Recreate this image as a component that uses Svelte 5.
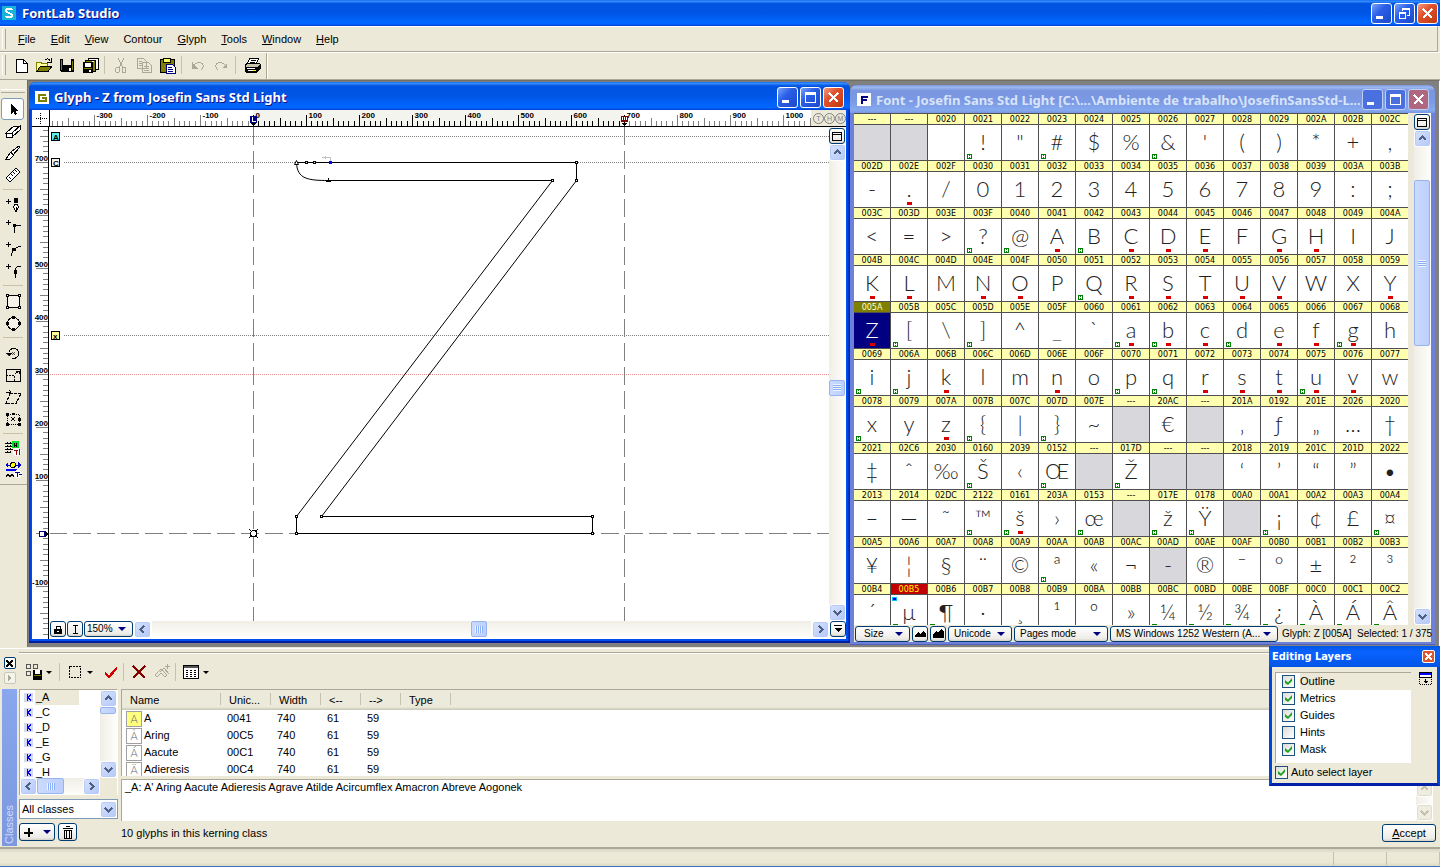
<script>
  const menus = ["File", "Edit", "View", "Contour", "Glyph", "Tools", "Window", "Help"];

  // These have no underlined mnemonic
  const noMnemonic = ["Contour"];

  const mainTools = ["new", "open", "save", "saveall", "|", "cut", "copy", "paste", "|", "undo", "redo", "|", "print"];

  const sideTools = [
    "edit", "eraser", "knife", "measure", "|",
    "pen", "corner", "curve", "tangent", "|",
    "rect", "ellipse", "|",
    "rotate", "scale", "slant", "free", "|",
    "t1hints", "tthints",
  ];

  // code:flags  h = hinted, k = in a kerning class, g = empty cell, d = duplicate
  const codes = `
    ---:g ---:g 0020 0021:h 0022 0023:h 0024 0025 0026:h 0027 0028 0029 002A 002B 002C
    002D 002E:k 002F 0030 0031 0032 0033 0034 0035 0036 0037 0038 0039 003A 003B
    003C 003D 003E 003F:h 0040:h 0041:k 0042:h 0043:k 0044:k 0045:k 0046 0047:k 0048:k 0049 004A
    004B:k 004C:k 004D 004E:k 004F:k 0050 0051:h 0052:k 0053:k 0054:k 0055:k 0056:k 0057 0058 0059:k
    005A:k 005B:h 005C 005D:h 005E 005F 0060 0061:hk 0062:hk 0063:k 0064:h 0065:k 0066:k 0067:hk 0068
    0069:h 006A:h 006B:k 006C 006D 006E:k 006F 0070:h 0071:h 0072:k 0073:k 0074:k 0075:hk 0076:k 0077
    0078:h 0079 007A:k 007B:h 007C 007D:h 007E ---:g 20AC ---:g 201A 0192 201E 2026 2020
    2021 02C6 2030 0160:h 2039 0152:h ---:g 017D:h ---:g ---:g 2018 2019 201C 201D 2022
    2013 2014 02DC 2122:h 0161:hk 203A 0153:h ---:g 017E:h 0178:h 00A0:g 00A1:h 00A2 00A3 00A4:h
    00A5 00A6 00A7 00A8 00A9 00AA:h 00AB 00AC 00AD:g 00AE 00AF 00B0 00B1 00B2 00B3
    00B4 00B5:hd 00B6:h 00B7 00B8 00B9 00BA 00BB 00BC:h 00BD:h 00BE:h 00BF:h 00C0:h 00C1:h 00C2:h`;

  const cells = codes
    .trim()
    .split(/\s+/)
    .map((item) => {
      const [code, flags = ""] = item.split(":");
      let char = code === "---" ? "" : String.fromCodePoint(parseInt(code, 16));
      if (code === "00AD") char = "-";
      return { code, flags, char };
    });

  let selected = $state("005A");

  const classes = ["_A", "_C", "_D", "_E", "_G", "_H"];

  const members = [
    ["A", "0041", "A"],
    ["Aring", "00C5", "Å"],
    ["Aacute", "00C1", "Á"],
    ["Adieresis", "00C4", "Ä"],
  ];

  let layers = $state([
    { name: "Outline", on: true },
    { name: "Metrics", on: true },
    { name: "Guides", on: true },
    { name: "Hints", on: false },
    { name: "Mask", on: true },
  ]);
  let autoSelect = $state(true);
  let zoom = $state("150%");
  let definition = $state("_A: A' Aring Aacute Adieresis Agrave Atilde Acircumflex Amacron Abreve Aogonek");

  // Font units to canvas pixels, origin at the glyph's zero point
  const originX = 203;
  const originY = 406;
  const toX = (u) => Math.round(originX + u * 0.53) + 0.5;
  const toY = (u) => Math.round(originY - u * 0.53) + 0.5;

  const ticks = (from, to) => {
    const list = [];
    for (let u = from; u <= to; u += 10) {
      list.push({ u, size: u % 100 === 0 ? 11 : u % 50 === 0 ? 8 : 5 });
    }
    return list;
  };
  const hTicks = ticks(-380, 1050);
  const vTicks = ticks(-190, 760);

  const guides = [
    { y: 9.5, tag: "A", kind: "asc" },
    { y: 35.5, tag: "C", kind: "cap" },
    { y: 208.5, tag: "x", kind: "xh" },
  ];

  const nodes = [
    [256.5, 35.5], [264.5, 35.5], [526.5, 35.5], [526.5, 53.5], [502.5, 53.5],
    [271.5, 389.5], [542.5, 389.5], [542.5, 406.5], [246.5, 406.5], [246.5, 389.5],
  ];
</script>

{#snippet icon(name)}
  <svg class="icon" width="20" height="20" viewBox="0 0 20 20" aria-hidden="true">
    {#if name === "new"}
      <path d="M5 4h7l4 4v9H5z" fill="#fff" stroke="#000" />
      <path d="M12 4v4h4" fill="none" stroke="#000" />
    {:else if name === "open"}
      <path d="M2.500 16V7h4l1 1h6v3" fill="#ffffa0" stroke="#808000" />
      <path d="M3 16.500L6.500 11H18l-4 5.500z" fill="#808000" stroke="#000" />
      <path d="M11 5c2-2 4-1 5 1M17 3v4h-4" fill="none" stroke="#000" />
    {:else if name === "save"}
      <path d="M3 4h14v13H4l-1-1z" fill="#000" />
      <path d="M4 5h1v10H4zM15 6h1v9h-1z" fill="#808000" />
      <path d="M6 4h8v6H6z" fill="#ece9d8" />
      <path d="M12 13h2v3h-2z" fill="#fff" />
    {:else if name === "saveall"}
      <path d="M8 3h10v11H8z" fill="#fff" stroke="#000" />
      <path d="M5.500 5h10v11h-10z" fill="#808000" stroke="#000" />
      <path d="M3 7h10v11H3z" fill="#000" />
      <path d="M5 8h6v4H5zM15 4h2v1h-2zM12 6h2v1h-2z" fill="#fff" />
      <path d="M4 13h8v1H4z" fill="#808000" /><path d="M9 15h2v2H9z" fill="#fff" />
    {:else if name === "cut"}
      <path d="M7 3l5 10M13 3L8 13" stroke="#aca899" fill="none" />
      <ellipse cx="6.500" cy="15" rx="2" ry="2.500" stroke="#aca899" fill="none" />
      <ellipse cx="13" cy="15" rx="2" ry="2.500" stroke="#aca899" fill="none" />
    {:else if name === "copy"}
      <path d="M3 3h6l3 3v7H3zM8 7h6l3 3v7H8z" fill="#ece9d8" stroke="#aca899" />
      <path d="M5 6h3M5 8h3M5 10h3M10 11h5M10 13h5M10 15h5" stroke="#aca899" />
    {:else if name === "paste"}
      <path d="M3 4h14v13H3z" fill="#808000" stroke="#000" />
      <path d="M6 3h7v4H6z" fill="#ffff60" stroke="#000" />
      <path d="M9 9h6l3 3v6H9z" fill="#fff" stroke="#000080" />
      <path d="M11 12h4M11 14h5M11 16h5" stroke="#000080" />
    {:else if name === "undo"}
      <path d="M4 7v6h6M4.500 12.500C6 8 10 7 13 8c3 1 3 5 0 7" fill="none" stroke="#aca899" />
      <path d="M4 8l5 5H4z" fill="#aca899" />
    {:else if name === "redo"}
      <path d="M15.500 12.500C14 8 10 7 7 8c-3 1-3 5 0 7" fill="none" stroke="#aca899" />
      <path d="M16 8l-5 5h5z" fill="#aca899" />
    {:else if name === "print"}
      <path d="M8 3h9l-3 6H5z" fill="#fff" stroke="#000" />
      <path d="M9 5h5M8 7h5" stroke="#000" />
      <path d="M3 10l3-2h10l2 1v5l-3 3H4l-1-1z" fill="#c8c4b0" stroke="#000" />
      <path d="M3 12h12v5H4zM15 12l3-3v5l-3 3z" fill="#000" />
      <path d="M5 13h8v1H5zM6 15h6v1H6z" fill="#fff" /><path d="M11 15h3v1h-3z" fill="#ffff00" />
    {:else if name === "edit"}
      <path d="M8 4v11l2.500-2.500L12 16l2-1-1.500-3H15z" fill="#000" />
    {:else if name === "eraser"}
      <path d="M3 12l8-7h6l-8 7z" fill="#fff" stroke="#000" />
      <path d="M3 12h6v4H3zM9 12l8-7v4l-8 7z" fill="#fff" stroke="#000" />
    {:else if name === "knife"}
      <path d="M2.500 16.500h4l4-4-3-3zM8 9l2 3 7-8-1-1z" fill="#fff" stroke="#000" />
    {:else if name === "measure"}
      <path d="M3 13L13 3l4 4L7 17z" fill="#fff" stroke="#000" />
      <path d="M6 12l2 2M8 9l2 2M10 7l2 2M12 5l2 2" stroke="#000" />
    {:else if name === "pen"}
      <path d="M3 6.500h5M5.500 4v5" stroke="#000" />
      <path d="M11 3h4v5h-4z" fill="#000" />
      <path d="M11.500 9.500h3l1 3-2.500 4-2.500-4z" fill="#fff" stroke="#000" /><path d="M13 12v5" stroke="#000" />
    {:else if name === "corner"}
      <path d="M3 5.500h5M5.500 3v5M11.500 16V8.500H18" stroke="#000" fill="none" />
      <path d="M10 7h3v3h-3z" fill="#000" />
    {:else if name === "curve"}
      <path d="M3 5.500h5M5.500 3v5" stroke="#000" /><path d="M8 17c1-6 4-9 10-10" fill="none" stroke="#000" />
      <path d="M9 9h4v3H9z" fill="#000" />
    {:else if name === "tangent"}
      <path d="M3 5.500h5M5.500 3v5" stroke="#000" /><path d="M12.500 17V9c0-3 2-4 5-4" fill="none" stroke="#000" />
      <path d="M11 9h3v4h-3z" fill="#000" />
    {:else if name === "rect"}
      <path d="M4.500 4.500h12v12h-12z" fill="#f4f2ea" stroke="#000" />
      <path d="M3.500 3.500h2v2h-2zM15.500 3.500h2v2h-2zM3.500 15.500h2v2h-2zM15.500 15.500h2v2h-2z" fill="#fff" stroke="#000" />
    {:else if name === "ellipse"}
      <circle cx="10.500" cy="10.500" r="6" fill="#f4f2ea" stroke="#000" />
      <path d="M9 3h3v3H9zM9 15h3v3H9zM3 9h3v3H3zM15 9h3v3h-3z" fill="#000" />
    {:else if name === "rotate"}
      <path d="M6 9a5 5 0 1 1 3 6" fill="none" stroke="#000" />
      <path d="M3 10h6l-3 3zM9 9l3 3M12 9l-3 3" fill="#000" stroke="#000" stroke-width=".6" />
    {:else if name === "scale"}
      <path d="M3.500 4.500h14v12h-14z" fill="none" stroke="#000" />
      <path d="M3 10.500h8.500V16" fill="none" stroke="#000" stroke-dasharray="2 1" />
      <path d="M12 9l4-3M13 6h3v3" fill="none" stroke="#000" />
    {:else if name === "slant"}
      <path d="M7 6.500h11l-5 10H3z" fill="none" stroke="#000" stroke-dasharray="3 1" />
      <path d="M3 5.500h5M6 3l2 2-2 2" fill="none" stroke="#000" />
    {:else if name === "free"}
      <path d="M4.500 5.500h12v10h-12z" fill="none" stroke="#000" stroke-dasharray="1 1" />
      <path d="M3 4h3v3H3zM15 9h3v3h-3zM3 14h3v3H3zM15 14h3v3h-3zM9 4h3v2H9z" fill="#000" />
      <path d="M8 8l4 4M12 8l-4 4" stroke="#000" />
    {:else if name === "t1hints"}
      <path d="M2 4.500h8M2 7.500h8M2 10.500h10M4.500 3v12M7.500 3v12M2 13.500h6" stroke="#000" stroke-dasharray="2 1" />
      <path d="M9 2h7v7H9z" fill="#0d2" /><path d="M11.500 4v4M13.500 4v4M11 6h3" stroke="#000" />
      <circle cx="14" cy="13" r="4" fill="#fff" /><path d="M11 11.500h4M13 11v5M16.500 10v6" stroke="#a00000" />
    {:else if name === "tthints"}
      <path d="M2 4l3-3v6zM18 4l-3-3v6z" fill="#0000c0" /><path d="M3 4h14" stroke="#0000c0" />
      <circle cx="10" cy="4" r="2.500" fill="#ff0" stroke="#000" /><path d="M3 8h11v2H3z" fill="#00f" />
      <path d="M3 16l2-3 2 3 2-3 2 3" fill="none" stroke="#000" />
      <circle cx="15" cy="13" r="4" fill="#fff" /><path d="M12 11.500h5M14.500 12v4M16 13.500h3" stroke="#000080" />
    {:else if name === "gridsave"}
      <path d="M2.500 2.500h4v4h-4zM9.500 2.500h4v4h-4zM2.500 9.500h4v4h-4z" fill="none" stroke="#555" />
      <path d="M9 8h9v10H9z" fill="#000" /><path d="M11 8h5v4h-5z" fill="#fff" /><path d="M10 13h7v1h-7z" fill="#808000" />
    {:else if name === "select"}
      <path d="M4.500 4.500h11v11h-11z" fill="none" stroke="#000" stroke-dasharray="2 1" />
    {:else if name === "accept"}
      <path d="M5 10l4 4 7-8v2l-7 8-4-4z" fill="#d00000" stroke="#d00000" />
    {:else if name === "delete"}
      <path d="M4 4l12 12M16 4L4 16" stroke="#800000" stroke-width="2" />
    {:else if name === "merge"}
      <path d="M3 13l6-6 6 6-2 2-4-4-4 4zM8 10l4-4 5 6M13 4.500h5M15.500 2v5" fill="none" stroke="#aca899" />
    {:else if name === "list"}
      <path d="M2.500 3.500h15v13h-15z" fill="#fff" stroke="#000" /><path d="M3 5h14" stroke="#555" stroke-width="2" />
      <path d="M5 8.500h10M5 10.500h10M5 12.500h10M5 14.500h10" stroke="#000" stroke-dasharray="2 2" />
    {:else if name === "trash"}
      <path d="M5 6.500h10M8 4.500h4M6.500 8.500h7v8h-7zM8.500 9v7M11.500 9v7" fill="none" stroke="#000" />
    {/if}
  </svg>
{/snippet}

{#snippet arrow(dir, label, off = false)}
  <button class="arrow {dir}" class:off aria-label={label}>
    <svg width="9" height="9" viewBox="0 0 9 9"><path d="M1 6l3.500-3.500L8 6" /></svg>
  </button>
{/snippet}

{#snippet winButtons(restore = false)}
  <div class="win-buttons">
    <button aria-label="Minimize"><svg viewBox="0 0 19 19"><path d="M4 12h7v3H4z" fill="#fff" /></svg></button>
    <button aria-label="Maximize">
      <svg viewBox="0 0 19 19" fill="none" stroke="#fff">
        {#if restore}
          <path d="M7.500 7V4.500h7v7H12M4.500 8.500h6v6h-6z" /><path d="M7 5h8M4 9h7" />
        {:else}
          <path d="M4.500 4.500h10v10h-10z" /><path d="M4 5.500h11" stroke-width="2" />
        {/if}
      </svg>
    </button>
    <button class="close" aria-label="Close">
      <svg viewBox="0 0 19 19"><path d="M5 5l9 9M14 5l-9 9" stroke="#fff" stroke-width="2" /></svg>
    </button>
  </div>
{/snippet}

{#snippet restoreIcon()}
  <svg width="10" height="9" viewBox="0 0 10 9" aria-hidden="true">
    <path d="M.5.5h9v8h-9zM0 2.500h10" fill="none" stroke="#000" />
  </svg>
{/snippet}

<div class="app">
  <header class="titlebar">
    <svg class="logo" width="14" height="14" viewBox="0 0 14 14" aria-hidden="true">
      <rect width="14" height="14" fill="#18b4d8" />
      <path d="M10 4C9 2 4 2 4 4.500S10 7 10 9.500 5 12 4 10" fill="none" stroke="#fff" stroke-width="2" />
    </svg>
    <h1>FontLab Studio</h1>
    {@render winButtons(true)}
  </header>

  <nav class="menubar">
    <span class="grip"></span>
    {#each menus as menu}
      <button>{#if noMnemonic.includes(menu)}{menu}{:else}<u>{menu[0]}</u>{menu.slice(1)}{/if}</button>
    {/each}
  </nav>

  <div class="toolbar">
    <div class="toolbar-group">
      <span class="grip"></span>
      {#each mainTools as tool}
        {#if tool === "|"}
          <span class="sep"></span>
        {:else}
          <button class="tool" aria-label={tool}>{@render icon(tool)}</button>
        {/if}
      {/each}
    </div>
  </div>

  <main class="workspace">
    <aside class="side">
      <div class="side-tools">
        <span class="side-grip"></span>
        {#each sideTools as tool}
          {#if tool === "|"}
            <span class="side-sep"></span>
          {:else}
            <button class:active={tool === "edit"} aria-label={tool}>{@render icon(tool)}</button>
          {/if}
        {/each}
      </div>
    </aside>

    <div class="desktop">
      <section class="window glyph-window">
        <div class="caption">
          <svg width="14" height="13" viewBox="0 0 14 13" aria-hidden="true">
            <rect width="14" height="13" rx="1" fill="#fff" />
            <path d="M11 3.500H4v6h6.500V7H7" fill="none" stroke="#808000" stroke-width="2" />
          </svg>
          <h2>Glyph - Z from Josefin Sans Std Light</h2>
          {@render winButtons()}
        </div>
        <div class="editor">
          <div class="corner">
            <svg width="18" height="17" aria-hidden="true">
              <path d="M8.500 3v11M4 8.500h11" stroke="#000" stroke-dasharray="1 1" />
            </svg>
          </div>
          <div class="hruler">
            <svg>
              <rect x="203" y="0" width="371" height="16" fill="#f4f4ee" />
              {#each hTicks as t}
                <path d="M{toX(t.u)} {16 - t.size}V16" stroke={t.u >= 0 && t.u <= 700 ? "#000" : "#808080"} />
                {#if t.size === 11}
                  <text x={toX(t.u) + 2} y="8">{t.u}</text>
                {/if}
              {/each}
              <path d="M0 16.500h900" stroke="#000" />
              <path d="M200 6h7v7h-7z" fill="#000080" /><path d="M202.500 7v4h3" stroke="#fff" fill="none" />
              <path d="M201 13h5l-2.500 3z" fill="#000" />
              <path d="M571.500 6.500h6v5h-6z" fill="#fff" stroke="#800000" /><path d="M573.500 7v3M575.500 7v3M571 10.500h7" stroke="#800000" />
              <path d="M572 13h5l-2.500 3z" fill="#000" />
            </svg>
            <div class="ruler-modes"><i>T</i><i>H</i><i>M</i></div>
          </div>
          <div class="vruler">
            <svg>
              {#each vTicks as t}
                <path d="M{16 - (t.size === 11 ? 12 : t.size)} {toY(t.u)}H16" stroke="#808080" />
                {#if t.size === 11 && t.u !== 0}
                  <text x="16" y={toY(t.u) - 2} text-anchor="end">{t.u}</text>
                {/if}
              {/each}
              <path d="M16.500 0v520" stroke="#000" />
              <path d="M7.500 404.500h5v5h-5z" fill="#fff" stroke="#000080" /><path d="M13 404l3 3-3 3z" fill="#000" />
            </svg>
          </div>
          <div class="canvas">
            <svg>
              {#each guides as g}
                <path d="M14 {g.y}H780" class="guide" />
                <g class="tag {g.kind}">
                  <rect x="1.500" y={g.y - 4} width="8" height="8" />
                  <text x="3" y={g.y + 3}>{g.tag}</text>
                </g>
              {/each}
              <path d="M0 247.500H780" class="guide low" />
              <path d="M203.500 0V500M574.500 0V500" class="metric" />
              <path d="M0 406.500H780" class="metric" stroke-dashoffset="1" />
              <circle cx="203.500" cy="406.500" r="3" fill="#fff" stroke="#000" />
              <path d="M199 402l2 2M208 402l-2 2M199 411l2-2M208 411l-2-2" stroke="#000" />
              <path
                class="outline"
                d="M246.500 35.500H526.500V53.500L271.500 389.500H542.500V406.500H246.500V389.500L502.500 53.500H278.500C258 53.500 247 52 246.500 35.500"
              />
              {#each nodes as [x, y]}
                <rect x={x - 1} y={y - 1} width="2" height="2" fill="#fff" stroke="#000" />
              {/each}
              <path class="outline mark" d="M244.500 37.500l2-4 2 4z" />
              <path d="M276 55l2.500-4 2.500 4z" fill="#000" />
              <rect x="279" y="34" width="3" height="3" fill="#00f" />
              <path d="M280.500 34v-3.500H275" fill="none" stroke="#c0c0c0" /><path d="M272 30.500l4-1.500v3z" fill="#c0c0c0" />
            </svg>
          </div>
          <div class="vscroll">
            <button class="mini" aria-label="Panel">{@render restoreIcon()}</button>
            {@render arrow("up", "Scroll up")}
            <div class="track"><span class="thumb short"></span></div>
            {@render arrow("down", "Scroll down")}
          </div>
          <div class="editor-bar">
            <button class="mini" aria-label="Lock">
              <svg width="8" height="9" viewBox="0 0 8 9"><path d="M0 4h8v5H0z" /><path d="M2 4V1.500h4V4" fill="none" stroke="#000" /><path d="M3 6h2v1H3z" fill="#fff" /></svg>
            </button>
            <button class="mini" aria-label="Text cursor">
              <svg width="7" height="9" viewBox="0 0 7 9"><path d="M1 .5h5M3.500 0v9M1 8.500h5" stroke="#000" /></svg>
            </button>
            <label class="combo zoom">
              <select bind:value={zoom} aria-label="Zoom"><option>150%</option></select>
            </label>
            {@render arrow("left", "Scroll left")}
            <div class="track"><span class="thumb short"></span></div>
            {@render arrow("right", "Scroll right")}
            <button class="mini" aria-label="Options">
              <svg width="8" height="8" viewBox="0 0 8 8"><path d="M0 0h8v1H0zM0 3h8L4 7z" /></svg>
            </button>
          </div>
        </div>
      </section>

      <section class="window font-window">
        <div class="caption">
          <svg width="14" height="13" viewBox="0 0 14 13" aria-hidden="true">
            <rect width="14" height="13" rx="1" fill="#fff" />
            <path d="M11 3.500H5V11M5 6.500h5" fill="none" stroke="#000080" stroke-width="2" />
          </svg>
          <h2>Font - Josefin Sans Std Light [C:\...\Ambiente de trabalho\JosefinSansStd-L...</h2>
          {@render winButtons()}
        </div>
        <div class="font-body">
          <div class="cells">
            {#each cells as cell}
              <button
                class="cell"
                class:selected={cell.code === selected}
                class:dup={cell.flags.includes("d")}
                class:empty={cell.flags.includes("g")}
                onclick={() => cell.char && (selected = cell.code)}
              >
                <span class="code">{cell.code}</span>
                <span class="char">{cell.char}</span>
                {#if cell.flags.includes("h")}
                  <svg class="flag hint" width="5" height="5" viewBox="0 0 5 5">
                    <path d="M0 0h5v5H0z" fill="#008000" /><path d="M1 1h1v3H1zM3 1h1v3H3zM2 2h1v1H2z" fill="#fff" />
                  </svg>
                {/if}
                {#if cell.flags.includes("k")}<span class="flag kern"></span>{/if}
                {#if cell.flags.includes("d")}<span class="flag double"></span>{/if}
              </button>
            {/each}
          </div>
          <div class="vscroll">
            <button class="mini" aria-label="Panel">{@render restoreIcon()}</button>
            {@render arrow("up", "Scroll up")}
            <div class="track"><span class="thumb long"></span></div>
            {@render arrow("down", "Scroll down")}
          </div>
        </div>
        <div class="font-bar">
          <label class="combo size"><select aria-label="Size"><option>Size</option></select></label>
          <button class="mini" aria-label="Smaller cells">
            <svg width="11" height="7" viewBox="0 0 11 7"><path d="M0 7V5l3-3 2 2 3-3 3 3v3z" /></svg>
          </button>
          <button class="mini" aria-label="Larger cells">
            <svg width="11" height="9" viewBox="0 0 11 9"><path d="M0 9V6l3-4 2 1 3-3 3 3v6z" /></svg>
          </button>
          <label class="combo unicode"><select aria-label="Index"><option>Unicode</option></select></label>
          <label class="combo mode"><select aria-label="Mode"><option>Pages mode</option></select></label>
          <label class="combo page"><select aria-label="Codepage"><option>MS Windows 1252 Western (A...</option></select></label>
          <p>Glyph: Z [005A]&nbsp; Selected: 1 / 375</p>
        </div>
      </section>
    </div>
  </main>

  <section class="dock">
    <div class="dock-side">
      <button class="dock-close" aria-label="Close panel">
        <svg width="7" height="7" viewBox="0 0 7 7"><path d="M0 0l7 7M7 0L0 7" stroke="#000" stroke-width="2" /></svg>
      </button>
      <button class="dock-close dim" aria-label="Expand panel">
        <svg width="4" height="6" viewBox="0 0 4 6"><path d="M0 0l3 3-3 3z" fill="#aca899" /></svg>
      </button>
      <span class="dock-label">Classes</span>
    </div>
    <div class="dock-main">
      <div class="dock-tools">
        <button class="tool" aria-label="Save classes">{@render icon("gridsave")}</button>
        <span class="drop"></span>
        <span class="sep"></span>
        <button class="tool" aria-label="Select">{@render icon("select")}</button>
        <span class="drop"></span>
        <button class="tool" aria-label="Apply">{@render icon("accept")}</button>
        <span class="sep"></span>
        <button class="tool" aria-label="Delete">{@render icon("delete")}</button>
        <button class="tool" aria-label="Add accents">{@render icon("merge")}</button>
        <span class="sep"></span>
        <button class="tool" aria-label="View">{@render icon("list")}</button>
        <span class="drop"></span>
      </div>
      <div class="dock-body">
        <div class="class-col">
          <div class="class-list">
            <ul>
              {#each classes as name, i}
                <li class:current={i === 0}>
                  <svg width="9" height="9" viewBox="0 0 9 9" aria-hidden="true">
                    <rect width="9" height="9" fill="#d4d8f0" />
                    <path d="M3 1v7M4 4.500L7 1.500M4 4.500L7 7.500" stroke="#00f" stroke-width="1" />
                  </svg>
                  <span>{name}</span>
                </li>
              {/each}
            </ul>
            <div class="vscroll">
              {@render arrow("up", "Scroll up")}
              <div class="track"><span class="thumb tiny"></span></div>
              {@render arrow("down", "Scroll down")}
            </div>
            <div class="hscroll">
              {@render arrow("left", "Scroll left")}
              <div class="track"><span class="thumb wide"></span></div>
              {@render arrow("right", "Scroll right")}
            </div>
          </div>
          <label class="filter">
            <select aria-label="Class filter"><option>All classes</option></select>
            <span class="arrow down"><svg width="9" height="9" viewBox="0 0 9 9"><path d="M1 6l3.500-3.500L8 6" /></svg></span>
          </label>
          <div class="class-actions">
            <button class="add" aria-label="Add class">
              <svg width="9" height="9" viewBox="0 0 9 9"><path d="M0 4.500h9M4.500 0v9" stroke="#000" stroke-width="2" /></svg>
              <span class="drop"></span>
            </button>
            <button class="bin" aria-label="Delete class">{@render icon("trash")}</button>
          </div>
        </div>
        <div class="member-col">
          <div class="member-table">
            <table>
              <thead>
                <tr><th>Name</th><th>Unic...</th><th>Width</th><th>&lt;--</th><th>--&gt;</th><th>Type</th><th></th></tr>
              </thead>
              <tbody>
                {#each members as [name, code, char], i}
                  <tr>
                    <td><span class="thumb-glyph" class:marked={i === 0}>{char}</span>{name}</td>
                    <td>{code}</td><td>740</td><td>61</td><td>59</td><td></td><td></td>
                  </tr>
                {/each}
              </tbody>
            </table>
          </div>
          <div class="member-text">
            <textarea aria-label="Class definition" spellcheck="false" bind:value={definition}></textarea>
            <div class="vscroll">
              {@render arrow("up", "Scroll up", true)}
              <div class="track"></div>
              {@render arrow("down", "Scroll down", true)}
            </div>
          </div>
          <div class="dock-foot">
            <p>10 glyphs in this kerning class</p>
            <button class="accept"><u>A</u>ccept</button>
          </div>
        </div>
      </div>
    </div>
  </section>

  <footer class="statusbar"><span></span><span></span><span></span></footer>

  <section class="layers">
    <div class="layers-caption">
      <h2>Editing Layers</h2>
      <button aria-label="Close">
        <svg width="7" height="7" viewBox="0 0 7 7"><path d="M0 0l7 7M7 0L0 7" stroke="#fff" stroke-width="2" /></svg>
      </button>
    </div>
    <div class="layers-body">
      <div class="layer-list">
        {#each layers as layer, i}
          <label class:current={i === 0}>
            <input type="checkbox" bind:checked={layer.on} /><span>{layer.name}</span>
          </label>
        {/each}
      </div>
      <svg width="13" height="13" viewBox="0 0 13 13" aria-hidden="true">
        <path d="M.5.5h12v5H.5z" fill="#fff" stroke="#000" /><path d="M1 1h11v2H1z" fill="#00f" />
        <path d="M.5 7v5.500h12V7" fill="none" stroke="#000" stroke-dasharray="1 1" />
        <path d="M6 7h1v2h2L6.500 11.500 4 9h2z" fill="#000" />
      </svg>
    </div>
    <label class="auto"><input type="checkbox" bind:checked={autoSelect} /><span>Auto select layer</span></label>
  </section>
</div>

<style>
  :global(body) {
    background: #ece9d8;
  }

  .app {
    position: relative;
    display: flex;
    flex-direction: column;
    min-height: 100vh;
    overflow: hidden;
    background: #ece9d8;
    color: #000;
    font: 11px/13px "Liberation Sans", Arial, sans-serif;
  }

  .app :is(button, select, textarea, input) {
    margin: 0;
    padding: 0;
    border: 0;
    background: none;
    color: inherit;
    font: inherit;
    box-sizing: border-box;
  }

  .app :is(h1, h2, p, ul) {
    margin: 0;
    padding: 0;
  }

  svg {
    display: block;
    flex: none;
    shape-rendering: crispEdges;
  }

  /* title bars */
  .titlebar,
  .caption {
    display: flex;
    align-items: center;
    flex: none;
    box-sizing: border-box;
    background: linear-gradient(#0a5be8 0, #3a95ff 4%, #0053e1 14%, #0055e5 50%, #06f 85%, #06f 92%, #003dd0 100%);
    color: #fff;
  }

  .titlebar {
    height: 26px;
    gap: 6px;
    padding: 0 2px;
  }

  h1,
  .caption h2 {
    flex: 1;
    overflow: hidden;
    white-space: nowrap;
    font: bold 13px/18px "Noto Sans", "Open Sans", sans-serif;
    text-shadow: 1px 1px #0f1089;
  }

  .win-buttons {
    display: flex;
    gap: 2px;
  }

  .win-buttons button {
    width: 21px;
    height: 21px;
    border: 1px solid #fff;
    border-radius: 3px;
    background: linear-gradient(135deg, #7aa2f8, #2a5fe8 40%, #1c48c8);
  }

  .win-buttons button.close {
    background: linear-gradient(135deg, #f09a80, #e0512c 40%, #c03810);
  }

  /* menu and toolbar */
  .menubar {
    display: flex;
    align-items: center;
    gap: 15px;
    height: 24px;
    margin-right: 2px;
    border-top: 1px solid #fff;
    border-right: 1px solid #aca899;
    border-bottom: 1px solid #aca899;
  }

  .menubar .grip {
    margin-right: -3px;
  }

  .grip {
    width: 2px;
    height: 20px;
    margin-left: 2px;
    border-right: 1px solid #aca899;
    border-left: 1px solid #fff;
  }

  .toolbar {
    display: flex;
    height: 26px;
    border-top: 1px solid #fff;
    border-bottom: 1px solid #aca899;
  }

  .toolbar-group {
    display: flex;
    align-items: center;
    padding: 0 3px 2px 0;
    border-right: 1px solid #aca899;
    box-shadow: 1px 0 #fff;
  }

  .toolbar .grip {
    margin-right: 3px;
  }

  .tool {
    display: grid;
    place-items: center;
    width: 23px;
    height: 24px;
  }

  .sep {
    width: 1px;
    height: 18px;
    margin: 0 4px 0 3px;
    background: #c5c2b0;
  }

  /* workspace */
  .workspace {
    display: flex;
    flex: 1;
    min-height: 400px;
  }

  .side {
    width: 27px;
    flex: none;
    border-right: 1px solid #716f64;
  }

  .side-tools {
    display: flex;
    flex-direction: column;
    align-items: center;
    padding: 9px 2px 2px 0;
    border-bottom: 1px solid #aca899;
  }

  .side-grip {
    width: 24px;
    height: 2px;
    margin-bottom: 5px;
    border-top: 1px solid #fff;
    border-bottom: 1px solid #aca899;
  }

  .side-tools button {
    display: grid;
    place-items: center;
    width: 23px;
    height: 22px;
    border-radius: 3px;
  }

  .app .side-tools button.active {
    border: 1px solid #7f9db9;
    background: #fff;
  }

  .side-sep {
    width: 20px;
    height: 1px;
    margin: 3px 0 4px;
    background: #c5c2a8;
  }

  .desktop {
    position: relative;
    flex: 1;
    border-top: 1px solid #716f64;
    border-right: 1px solid #fff;
    background: #808080;
  }

  .window {
    position: absolute;
    display: flex;
    flex-direction: column;
    box-sizing: border-box;
    border-radius: 7px 7px 0 0;
    overflow: hidden;
  }

  .glyph-window {
    top: 1px;
    bottom: 4px;
    left: 1px;
    width: 821px;
    padding: 0 4px 4px 3px;
    background: linear-gradient(90deg, #0831d9, #0050ee 3px, #0050ee calc(100% - 3px), #001ea0);
    box-shadow: inset 0 -2px #001ea0;
  }

  .caption {
    gap: 2px;
    height: 28px;
  }

  .caption > svg {
    margin-right: 3px;
  }

  .glyph-window .caption {
    margin: 0 -4px 0 -3px;
    padding: 2px 6px 0;
  }

  .font-window {
    top: 4px;
    right: 4px;
    bottom: 2px;
    width: 585px;
    padding: 0 4px 3px;
    background: #6f80d8;
    box-shadow: inset 0 -1px #5560b8;
  }

  .font-window .caption {
    height: 28px;
    margin: 0 -4px;
    padding: 1px 6px 0 7px;
    background: linear-gradient(#7a96df, #9db9f0 8%, #7a96df 20%, #7b98e4 55%, #85a9ee 90%, #7a96df);
  }

  .font-window .caption h2 {
    color: #d8e4f8;
    text-shadow: none;
  }

  .font-window .win-buttons button:not(.close) {
    background: #4a70e0;
  }

  .font-window .win-buttons button.close {
    background: #b06880;
  }

  .font-window .win-buttons button {
    border-color: #c0d0f4;
  }

  /* glyph editor */
  .editor {
    display: grid;
    grid-template: 17px 1fr 18px / 18px 1fr 17px;
    flex: 1;
    min-height: 0;
    background: #fff;
  }

  .editor svg text {
    font: bold 8px "Liberation Sans Narrow", "Liberation Sans", sans-serif;
  }

  .corner {
    border-right: 1px solid #000;
    border-bottom: 1px solid #000;
    box-sizing: border-box;
  }

  .hruler {
    display: flex;
    grid-column: 2 / 4;
    overflow: hidden;
  }

  .hruler svg {
    flex: 1;
    width: 0;
    height: 17px;
  }

  .ruler-modes {
    display: flex;
    align-items: center;
    height: 16px;
    padding-left: 2px;
    border-bottom: 1px solid #000;
    background: #ece9d8;
  }

  .ruler-modes i {
    flex: none;
    width: 9px;
    height: 9px;
    border: 1px solid #808080;
    border-radius: 50%;
    color: #808080;
    font: 7px/9px "Liberation Sans", sans-serif;
    text-align: center;
  }

  .vruler {
    grid-row: 2 / 4;
    overflow: hidden;
  }

  .vruler svg {
    width: 18px;
    height: 100%;
  }

  .canvas {
    overflow: hidden;
  }

  .canvas svg {
    width: 100%;
    height: 100%;
  }

  .guide {
    stroke: #808080;
    stroke-dasharray: 1 1;
  }

  .guide.low {
    stroke: #e89090;
  }

  .metric {
    fill: none;
    stroke: #808080;
    stroke-dasharray: 18 6;
  }

  .outline {
    fill: none;
    stroke: #000;
    shape-rendering: auto;
  }

  .outline.mark {
    fill: #fff;
  }

  .tag rect {
    fill: #f4f4ee;
    stroke: #000;
  }

  .tag.asc rect {
    fill: #60f0f0;
  }

  .tag.xh rect {
    fill: #ffff90;
  }

  /* scroll bars */
  .vscroll {
    display: flex;
    flex-direction: column;
    width: 17px;
    background: linear-gradient(90deg, #f0eee6, #fefefb);
  }

  .hscroll {
    display: flex;
    height: 17px;
    background: linear-gradient(#f0eee6, #fefefb);
  }

  .track {
    display: flex;
    flex: 1;
  }

  .app .arrow {
    display: grid;
    place-items: center;
    flex: none;
    width: 17px;
    height: 17px;
    border: 1px solid #fff;
    border-radius: 3px;
    background: linear-gradient(135deg, #d6e2fe, #b4c8f8);
    box-shadow: inset 0 0 0 1px #b8cbf6;
    box-sizing: border-box;
  }

  .arrow path {
    fill: none;
    stroke: #4d6185;
    stroke-width: 2;
  }

  .arrow.down svg {
    transform: rotate(180deg);
  }

  .arrow.left svg {
    transform: rotate(-90deg);
  }

  .arrow.right svg {
    transform: rotate(90deg);
  }

  .app .arrow.off {
    background: #efede0;
    box-shadow: inset 0 0 0 1px #e0ddcc;
  }

  .arrow.off path {
    stroke: #c4c1b0;
  }

  .thumb {
    display: grid;
    place-items: center;
    box-sizing: border-box;
    border: 1px solid #98b4ee;
    border-radius: 2px;
    background: linear-gradient(90deg, #cbdafe, #bccffc);
  }

  .thumb.short,
  .thumb.tiny,
  .thumb.long {
    width: 16px;
    height: 16px;
  }

  .thumb::after {
    content: "";
    width: 8px;
    height: 7px;
    background: repeating-linear-gradient(#eef4fe 0 1px, #8cb0f8 1px 2px);
  }

  .editor-bar .thumb::after,
  .thumb.wide::after {
    background: repeating-linear-gradient(90deg, #eef4fe 0 1px, #8cb0f8 1px 2px);
  }

  .editor .vscroll,
  .font-body .vscroll {
    padding-top: 1px;
  }

  .editor .vscroll .track {
    align-items: center;
    padding-top: 10px;
  }

  .editor-bar .track {
    justify-content: center;
    padding-right: 6px;
    background: linear-gradient(#f0eee6, #fefefb);
  }

  .thumb.long {
    height: 166px;
    margin-top: 33px;
  }

  .thumb.tiny {
    height: 7px;
  }

  .thumb.tiny::after {
    display: none;
  }

  .thumb.wide {
    width: 27px;
    height: 16px;
  }

  /* small raised controls */
  .app .mini,
  .combo,
  .app .class-actions button,
  .app .accept {
    border: 1px solid #003c74;
    border-radius: 3px;
    background: linear-gradient(#fff, #ecebe6 85%, #d6d0c5);
    box-sizing: border-box;
  }

  .app .mini {
    display: grid;
    place-items: center;
    flex: none;
    width: 16px;
    height: 16px;
  }

  .combo {
    position: relative;
    flex: none;
    height: 16px;
  }

  .app .combo select {
    display: block;
    width: 100%;
    height: 14px;
    padding: 0 14px 0 5px;
    appearance: none;
    font-size: 10px;
    line-height: 12px;
  }

  .combo::after {
    content: "";
    position: absolute;
    top: 5px;
    right: 6px;
    border: 4px solid transparent;
    border-top-color: #000080;
    border-bottom: 0;
    pointer-events: none;
  }

  .editor-bar {
    display: flex;
    align-items: flex-start;
    grid-column: 2 / 4;
    gap: 1px;
  }

  .zoom {
    width: 49px;
  }

  .app .zoom select {
    padding: 0 14px 0 2px;
  }

  /* font window */
  .font-body {
    display: flex;
    flex: 1;
    gap: 6px;
    min-height: 0;
    background: #ece9d8;
  }

  .cells {
    display: grid;
    grid-template-columns: repeat(15, 37px);
    grid-auto-rows: 47px;
    width: 555px;
    overflow: hidden;
  }

  .app .cell {
    position: relative;
    display: flex;
    flex-direction: column;
    border-top: 1px solid #505050;
    border-right: 1px solid #505050;
    background: #fff;
    overflow: hidden;
  }

  .code {
    width: 100%;
    height: 10px;
    border-bottom: 1px solid #505050;
    background: #ffffb0;
    font: 8px/11px "DejaVu Sans", sans-serif;
  }

  .char {
    flex: 1;
    width: 100%;
    color: #222;
    font: 300 22px/34px Lato, "Open Sans", sans-serif;
    white-space: pre;
  }

  .cell.empty .char {
    background: #d8d8dc;
  }

  .cell.selected .code {
    background: #808000;
    color: #ffffd0;
  }

  .cell.selected .char {
    background: #000080;
    color: #fff;
  }

  .cell.dup .code {
    background: #c00000;
    color: #ff0;
  }

  .flag {
    position: absolute;
    box-sizing: border-box;
  }

  .flag.hint {
    bottom: 1px;
    left: 2px;
  }

  .flag.kern {
    bottom: 2px;
    left: 16px;
    width: 5px;
    height: 3px;
    background: #d80000;
  }

  .flag.double {
    top: 13px;
    left: 1px;
    width: 5px;
    height: 4px;
    border: 1px solid #00c0ff;
    background: #00f;
  }

  .font-bar {
    display: flex;
    align-items: center;
    gap: 2px;
    height: 17px;
    padding-left: 1px;
    background: #ece9d8;
    font-size: 10px;
    white-space: nowrap;
  }

  .size {
    width: 55px;
  }

  .app .size select {
    padding-left: 8px;
  }

  .unicode {
    width: 64px;
  }

  .mode {
    width: 94px;
  }

  .page {
    width: 168px;
    margin-right: 2px;
  }

  /* classes panel */
  .dock {
    display: flex;
    margin-top: 1px;
    border-top: 1px solid #fff;
    border-bottom: 1px solid #aca899;
  }

  .dock-side {
    display: flex;
    flex-direction: column;
    align-items: center;
    flex: none;
    gap: 3px;
    width: 15px;
    margin: 8px 2px 1px;
  }

  .app .dock-close {
    display: grid;
    place-items: center;
    width: 12px;
    height: 12px;
    border: 1px solid #003c74;
    border-radius: 2px;
    background: #fff;
  }

  .app .dock-close.dim {
    border-color: #c9c7ba;
    background: #f5f4ea;
  }

  .dock-label {
    flex: 1;
    width: 15px;
    margin-top: 2px;
    box-sizing: border-box;
    padding-top: 2px;
    background: linear-gradient(#7b98e0, #8aa6ec);
    color: #d0dcf8;
    line-height: 15px;
    writing-mode: vertical-rl;
    transform: rotate(180deg);
  }

  .dock-main {
    flex: 1;
    min-width: 0;
    margin-top: 3px;
    border-top: 1px solid #aca899;
    box-shadow: inset 0 1px #fff;
  }

  .dock-tools {
    display: flex;
    align-items: center;
    height: 36px;
    padding: 2px 0 0 3px;
    box-sizing: border-box;
  }

  .dock-tools .drop {
    margin: 0 5px 0 1px;
  }

  .dock-tools .sep {
    margin: 0 3px 0 2px;
  }

  .drop {
    border: 3px solid transparent;
    border-top-color: #000;
    border-bottom: 0;
  }

  .dock-body {
    display: flex;
    gap: 3px;
    padding-bottom: 2px;
  }

  .class-col {
    display: flex;
    flex-direction: column;
    width: 99px;
  }

  .class-list {
    display: grid;
    grid-template: 88px 17px / 1fr 17px;
    border-top: 1px solid #aca899;
    border-left: 1px solid #aca899;
    border-right: 1px solid #fff;
  }

  ul {
    overflow: hidden;
    list-style: none;
    background: #fff;
  }

  li {
    display: flex;
    align-items: center;
    gap: 2px;
    height: 15px;
    padding-left: 4px;
  }

  li span {
    flex: 1;
    padding: 1px 0 1px 1px;
  }

  li.current span {
    background: #ece9d8;
  }

  li:first-child {
    padding-right: 21px;
  }

  .filter {
    display: flex;
    align-items: center;
    height: 18px;
    margin-top: 4px;
    border: 1px solid #7f9db9;
    background: #fff;
  }

  .app .filter select {
    flex: 1;
    min-width: 0;
    padding-left: 2px;
    appearance: none;
  }

  .class-actions {
    display: flex;
    gap: 3px;
    margin-top: 4px;
  }

  .app .class-actions button {
    display: flex;
    align-items: center;
    justify-content: center;
    height: 18px;
  }

  .add {
    gap: 10px;
    width: 36px;
  }

  .add .drop {
    border-width: 4px;
    border-bottom: 0;
    border-top-color: #000080;
  }

  .bin {
    width: 19px;
  }

  .member-col {
    display: flex;
    flex-direction: column;
    flex: 1;
    min-width: 0;
  }

  .member-table {
    height: 86px;
    overflow: hidden;
    border-top: 1px solid #aca899;
    border-left: 1px solid #aca899;
    background: #fff;
  }

  table {
    width: 100%;
    border-collapse: collapse;
    table-layout: fixed;
  }

  tr {
    height: 17px;
  }

  thead tr {
    height: 20px;
    background: linear-gradient(#ebeadb 85%, #c8c5b4);
  }

  th {
    width: 50px;
    padding: 0 0 0 8px;
    box-sizing: border-box;
    background: linear-gradient(#c5c2b0, #c5c2b0) right 3px / 1px 12px no-repeat;
    font-weight: normal;
    text-align: left;
  }

  th:first-child {
    width: 99px;
  }

  th:nth-child(4),
  th:nth-child(5) {
    width: 40px;
  }

  th:last-child {
    width: auto;
    background: none;
  }

  td {
    height: 17px;
    padding: 0 0 0 6px;
    white-space: nowrap;
  }

  td:first-child {
    display: flex;
    align-items: center;
    gap: 2px;
    padding-left: 4px;
  }

  .thumb-glyph {
    width: 14px;
    height: 14px;
    border: 1px solid #a0a0a0;
    color: #666;
    font: 300 11px/14px Lato, sans-serif;
    text-align: center;
  }

  .thumb-glyph.marked {
    background: #ffff80;
  }

  .member-text {
    display: flex;
    height: 41px;
    margin: 3px 7px 0 0;
    border-top: 1px solid #aca899;
    border-left: 1px solid #aca899;
    background: #fff;
  }

  .app .member-text textarea {
    flex: 1;
    padding: 1px 3px;
    outline: 0;
    resize: none;
  }

  .dock-foot {
    display: flex;
    align-items: center;
    justify-content: space-between;
    height: 24px;
    padding-right: 4px;
  }

  .app .accept {
    width: 54px;
    height: 18px;
  }

  .statusbar {
    display: flex;
    flex: none;
    height: 17px;
    border-top: 1px solid #aca899;
    border-bottom: 1px solid #4070c0;
    background: linear-gradient(#d8d5c4, #ece9d8 4px, #ece9d8 13px, #dcd9c4);
  }

  .statusbar span {
    width: 52px;
    margin: 3px 0 1px;
    border-right: 1px solid #c5c2b0;
  }

  .statusbar span:first-child {
    flex: 1;
  }

  /* floating layers palette */
  .layers {
    position: absolute;
    right: 0;
    bottom: 81px;
    width: 171px;
    box-sizing: border-box;
    border: 3px solid #0046d8;
    border-top: 0;
    border-bottom-color: #0020a8;
    background: #ece9d8;
  }

  .layers-caption {
    display: flex;
    align-items: center;
    justify-content: space-between;
    height: 21px;
    margin: 0 -3px;
    padding: 0 5px 0 3px;
    background: linear-gradient(#0058e6, #0a62ff 30%, #0055e5);
    color: #fff;
  }

  .layers-caption h2 {
    font: bold 11px/14px "DejaVu Sans Condensed", sans-serif;
  }

  .app .layers-caption button {
    display: grid;
    place-items: center;
    width: 13px;
    height: 13px;
    border: 1px solid #fff;
    border-radius: 2px;
    background: #e0552c;
  }

  .layers-body {
    display: flex;
    justify-content: space-between;
    padding: 5px 5px 0 3px;
  }

  .layer-list {
    width: 135px;
    height: 90px;
    border-top: 1px solid #aca899;
    border-left: 1px solid #aca899;
    background: #fff;
  }

  .layer-list label {
    display: flex;
    align-items: center;
    gap: 5px;
    height: 17px;
    padding-left: 6px;
  }

  .layer-list label span {
    flex: 1;
    padding: 2px 0;
  }

  .layer-list label.current span {
    background: #ece9d8;
  }

  .auto {
    display: flex;
    align-items: center;
    gap: 3px;
    padding: 3px 3px 4px;
  }

  .app input[type="checkbox"] {
    display: grid;
    place-items: center;
    flex: none;
    width: 13px;
    height: 13px;
    appearance: none;
    border: 1px solid #1c5180;
    background: linear-gradient(135deg, #dcdcd7, #fff);
  }

  input[type="checkbox"]:checked::before {
    content: "";
    width: 7px;
    height: 7px;
    background: #21a121;
    clip-path: polygon(0 29%, 43% 64%, 100% 0, 100% 43%, 43% 100%, 0 71%);
  }
</style>
